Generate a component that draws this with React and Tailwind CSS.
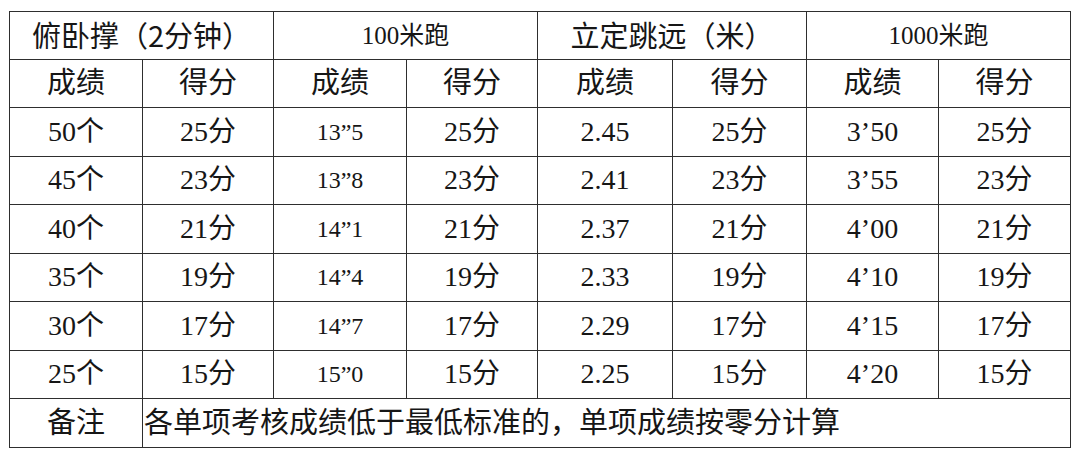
const rows = [
  ["50个", "25分", "13”5", "25分", "2.45", "25分", "3’50", "25分"],
  ["45个", "23分", "13”8", "23分", "2.41", "23分", "3’55", "23分"],
  ["40个", "21分", "14”1", "21分", "2.37", "21分", "4’00", "21分"],
  ["35个", "19分", "14”4", "19分", "2.33", "19分", "4’10", "19分"],
  ["30个", "17分", "14”7", "17分", "2.29", "17分", "4’15", "17分"],
  ["25个", "15分", "15”0", "15分", "2.25", "15分", "4’20", "15分"],
];

const widths = [133, 131, 133, 131, 135, 134, 132, 132];

const cell = "border border-[#2e2e2e] p-0 text-center align-middle";

export default function App() {
  return (
    <div className="w-[1080px] h-[460px] bg-white pt-[11px] pl-[9px]">
      <table
        className="table-fixed border-collapse text-[#161616] leading-none"
        style={{ fontFamily: '"Liberation Serif", "Noto Sans CJK SC", serif' }}
      >
        <colgroup>
          {widths.map((w, i) => (
            <col key={i} style={{ width: w }} />
          ))}
        </colgroup>
        <tbody>
          <tr className="h-[48px]">
            <td colSpan={2} className={`${cell} text-[29px]`}>
              <span style={{ fontFamily: '"Noto Sans CJK SC", sans-serif' }}>俯卧撑（2分钟）</span>
            </td>
            <td colSpan={2} className={`${cell} text-[25px]`}>100米跑</td>
            <td colSpan={2} className={`${cell} text-[29px]`}>
              <span style={{ fontFamily: '"Noto Sans CJK SC", sans-serif' }}>立定跳远（米）</span>
            </td>
            <td colSpan={2} className={`${cell} text-[25px]`}>1000米跑</td>
          </tr>
          <tr className="h-[48px]">
            {["成绩", "得分", "成绩", "得分", "成绩", "得分", "成绩", "得分"].map((t, i) => (
              <td key={i} className={`${cell} text-[29px]`}>{t}</td>
            ))}
          </tr>
          {rows.map((r, ri) => (
            <tr key={ri} className="h-[48.5px]">
              {r.map((t, i) => (
                <td key={i} className={`${cell} ${i === 2 ? "text-[24px]" : "text-[28px]"}`}>
                  {t}
                </td>
              ))}
            </tr>
          ))}
          <tr className="h-[49px]">
            <td className={`${cell} text-[29px]`}>备注</td>
            <td colSpan={7} className="border border-[#2e2e2e] p-0 pl-[1px] text-left align-middle text-[29px]">
              各单项考核成绩低于最低标准的，单项成绩按零分计算
            </td>
          </tr>
        </tbody>
      </table>
    </div>
  );
}
